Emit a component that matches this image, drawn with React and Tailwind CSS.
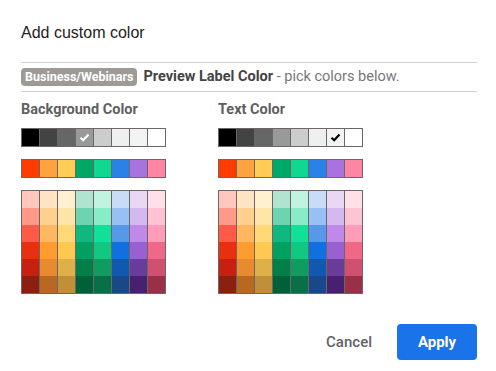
import React from "react";

const grays = ["#000000", "#434343", "#666666", "#999999", "#cccccc", "#efefef", "#f3f3f3", "#ffffff"];
const brights = ["#ff3c00", "#ffa340", "#ffcd55", "#00a865", "#10d890", "#2a82e6", "#a873de", "#ff85a5"];

// columns of the big palette, light to dark
const columns = [
  ["#ffc8bc", "#ff9a88", "#ff5a48", "#e83010", "#c82010", "#8c2010"],
  ["#ffe4c4", "#ffd090", "#ffb860", "#ff9c30", "#e88a30", "#b86820"],
  ["#fff0d0", "#ffe6a8", "#ffd878", "#ffc850", "#e0b048", "#c09038"],
  ["#b0e4d0", "#6cd4b0", "#10b880", "#00a060", "#008048", "#006038"],
  ["#c0f4e0", "#88ecc8", "#10e098", "#10c880", "#109c60", "#087048"],
  ["#c8dcf8", "#98c0f4", "#5898e8", "#1070e0", "#1058b0", "#184888"],
  ["#e8d8f4", "#d4b8f0", "#c088e8", "#9860d0", "#683c98", "#482070"],
  ["#ffe0e8", "#ffc4d4", "#ff9cb8", "#f06888", "#d05070", "#983048"],
];

function Check({ dark }) {
  return (
    <svg width="11" height="9" viewBox="0 0 11 9">
      <path d="M1.5 4.8 L4.2 7.3 L9.5 1.5" fill="none" stroke={dark ? "#000" : "#fff"} strokeWidth="2.2" />
    </svg>
  );
}

function Palette({ title, selected, darkCheck }) {
  return (
    <div className="w-[145px]">
      <div className="h-[18px] leading-[18px] text-[14.5px] font-bold text-[#5f5f5f] whitespace-nowrap">{title}</div>
      <div className="mt-[9px] grid grid-cols-8 gap-px p-px bg-[#6d6666]">
        {grays.map((c, i) => (
          <div key={c} className="h-[17px] flex items-center justify-center" style={{ backgroundColor: c }}>
            {i === selected && <Check dark={darkCheck} />}
          </div>
        ))}
      </div>
      <div className="mt-[12px] grid grid-cols-8 gap-px p-px bg-[#6d6666]">
        {brights.map((c) => (
          <div key={c} className="h-[17px]" style={{ backgroundColor: c }} />
        ))}
      </div>
      <div className="mt-[12px] grid grid-cols-8 gap-x-px p-px bg-[#6d6666]">
        {columns.map((col, i) => (
          <div key={i} className="flex flex-col">
            {col.map((c) => (
              <div key={c} className="h-[17px]" style={{ backgroundColor: c }} />
            ))}
          </div>
        ))}
      </div>
    </div>
  );
}

export default function App() {
  return (
    <div className="w-[496px] h-[371px] bg-white pl-[21px] pr-[19px] pt-[22px] font-['Roboto',sans-serif]">
      <h2 className="h-[22px] leading-[22px] text-[16px] text-[#222] font-['Liberation_Sans',Arial,sans-serif]">
        Add custom color
      </h2>

      <div className="mt-[18px] h-[30px] border-y border-[#d2d2d2] flex items-center gap-[6px]">
        <span className="h-[18px] leading-[18px] px-[4px] rounded-[4px] bg-[#9e9b97] text-white text-[12.5px] font-bold">
          Business/Webinars
        </span>
        <span className="text-[14.5px] text-[#444] font-bold">
          Preview Label Color<span className="font-normal text-[#777]"> - pick colors below.</span>
        </span>
      </div>

      <div className="mt-[9px] flex gap-[52px]">
        <Palette title="Background Color" selected={3} darkCheck={false} />
        <Palette title="Text Color" selected={6} darkCheck={true} />
      </div>

      <div className="mt-[30px] flex justify-end items-center gap-[17px]">
        <button className="h-[36px] px-[8px] text-[15px] font-medium text-[#5f6368]">Cancel</button>
        <button className="h-[36px] w-[80px] rounded-[4px] bg-[#1a73e8] text-white text-[15px] font-bold">Apply</button>
      </div>
    </div>
  );
}
